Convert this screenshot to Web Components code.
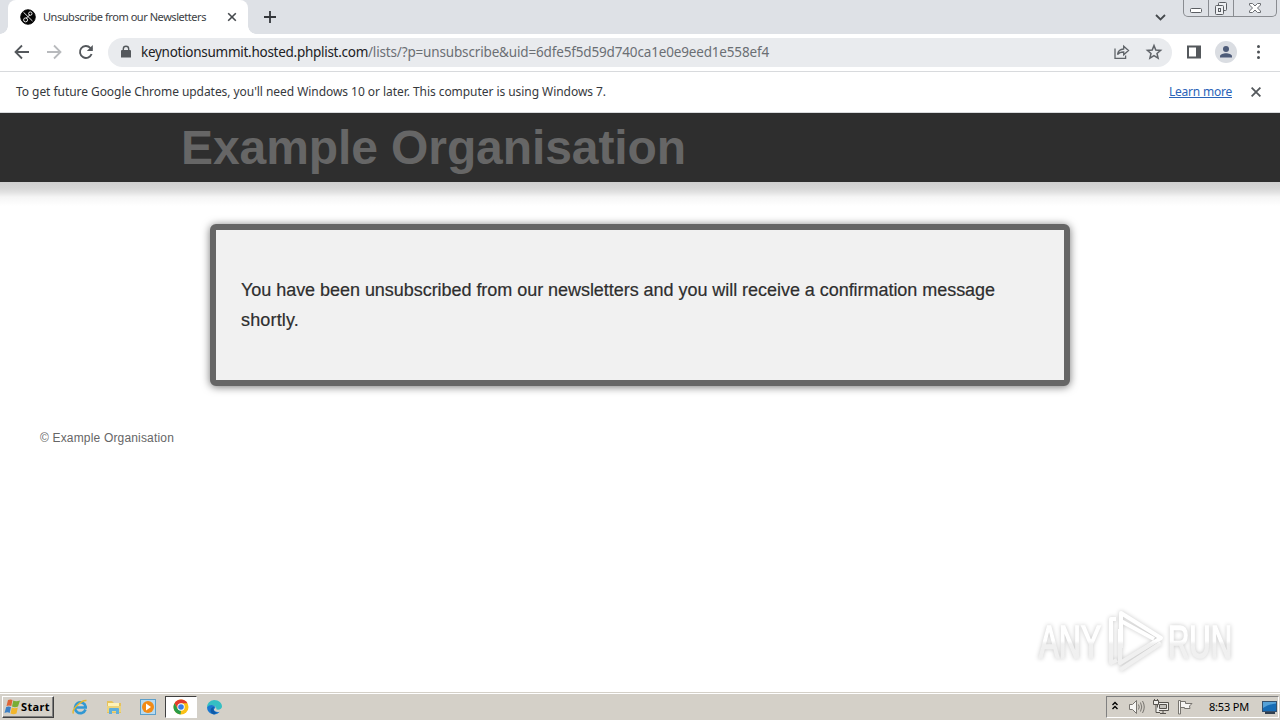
<!DOCTYPE html>
<html lang="en">
<head>
<meta charset="utf-8">
<title>Unsubscribe from our Newsletters</title>
<style>
    body{
        margin: 0;
        width: 1280px;
        height: 720px;
        overflow: hidden;
        background: #fff;
        font-family: "Noto Sans", sans-serif;
    }
</style>
</head>
<body>
<desktop-screen>
    <tab-strip slot="browser"><fit-text width="163">Unsubscribe from our Newsletters</fit-text></tab-strip>
    <address-bar slot="browser">
        <fit-text slot="host" width="227">keynotionsummit.hosted.phplist.com</fit-text>
        <fit-text slot="path" width="401">/lists/?p=unsubscribe&amp;uid=6dfe5f5d59d740ca1e0e9eed1e558ef4</fit-text>
    </address-bar>
    <info-bar slot="browser">
        <fit-text width="590">To get future Google Chrome updates, you'll need Windows 10 or later. This computer is using Windows 7.</fit-text>
        <fit-text slot="link" width="63">Learn more</fit-text>
    </info-bar>
    <news-page slot="page">
        <fit-text slot="title" width="505">Example Organisation</fit-text>
        <message-box>
            <fit-text width="754">You have been unsubscribed from our newsletters and you will receive a confirmation message</fit-text>
            <fit-text width="58">shortly.</fit-text>
        </message-box>
        <fit-text slot="footer" width="134">© Example Organisation</fit-text>
    </news-page>
    <run-watermark slot="overlay"></run-watermark>
    <task-bar slot="taskbar"></task-bar>
</desktop-screen>

<script>
function define(name, html, ready){
    const template = document.createElement('template');
    template.innerHTML = html;

    customElements.define(name, class extends HTMLElement{
        constructor(){
            super();
            this.attachShadow({ mode: 'open' });
            this.shadowRoot.appendChild(template.content.cloneNode(true));
        }

        connectedCallback(){
            if(ready) ready(this);
        }
    });
}

define('desktop-screen', `
    <style>
    :host{
        display: flex;
        flex-direction: column;
        position: relative;
        width: 1280px;
        height: 720px;
    }

    main{
        flex: 1;
        min-height: 0;
        overflow: hidden;
    }
    </style>
    <slot name="browser"></slot>
    <main><slot name="page"></slot></main>
    <slot name="taskbar"></slot>
    <slot name="overlay"></slot>
`);

define('tab-strip', `
    <style>
    :host{
        display: flex;
        height: 34px;
        background: #dee1e6;
        color: #3c4043;
        font-size: 11px;
    }

    .tab{
        display: flex;
        align-items: center;
        box-sizing: border-box;
        position: relative;
        width: 240px;
        margin-left: 8px;
        padding-left: 12px;
        border-radius: 8px 8px 0 0;
        background: #fff;
    }

    .tab::before, .tab::after{
        content: '';
        position: absolute;
        bottom: 0;
        width: 8px;
        height: 8px;
    }

    .tab::before{
        left: -8px;
        background: radial-gradient(circle at 0 0, transparent 7.5px, #fff 8px);
    }

    .tab::after{
        right: -8px;
        background: radial-gradient(circle at 100% 0, transparent 7.5px, #fff 8px);
    }

    .favicon{ margin-right: 7px; }
    .close{ margin-left: 21px; }
    .plus{ margin: 11px 0 0 16px; }
    .search{ margin: 14px 17px 0 auto; }

    .tab fit-text, .tab slot{ line-height: 14px; }

    .controls{
        display: flex;
        box-sizing: border-box;
        width: 94px;
        height: 17px;
        margin-right: 3px;
        border: 1px solid #898c91;
        border-top: 0;
        border-radius: 0 0 5px 5px;
    }

    .controls span{
        display: flex;
        justify-content: center;
        width: 24px;
        border-right: 1px solid #898c91;
    }

    .controls span:last-child{
        flex: 1;
        border: 0;
    }
    </style>
    <div class="tab">
        <svg class="favicon" width="16" height="16" viewBox="0 0 16 16" fill="none" stroke="#fff" stroke-width=".9">
            <circle cx="8" cy="8" r="7.3" fill="#050505" stroke="#050505"/>
            <path d="M3.5 3.3 12.5 12M10 5.7 5.8 9.6"/>
            <circle cx="10.3" cy="4.6" r="1.7"/><circle cx="5.6" cy="10.9" r="2"/>
        </svg>
        <slot></slot>
        <svg class="close" width="10" height="10" stroke="#45494d" stroke-width="1.6"><path d="M1.2 1.2 8.8 8.8M8.8 1.2 1.2 8.8"/></svg>
    </div>
    <svg class="plus" width="12" height="12" stroke="#34373b" stroke-width="1.8"><path d="M6 0V12M0 6H12"/></svg>
    <svg class="search" width="11" height="7" fill="none" stroke="#45494d" stroke-width="1.8"><path d="M1 1 5.5 5.5 10 1"/></svg>
    <div class="controls">
        <span><svg width="14" height="16" fill="#fff" stroke="#5b5e63"><rect x="1.5" y="8.5" width="11" height="4" rx="1"/></svg></span>
        <span><svg width="14" height="16" fill="#eef0f3" stroke="#5b5e63"><rect x="4.5" y="2.5" width="8" height="8" rx="1"/><rect x="1.5" y="5.5" width="8" height="9" rx="1"/><rect x="4.5" y="8.5" width="2" height="3"/></svg></span>
        <span><svg width="14" height="16" fill="#fff" stroke="#6b6e73"><path d="M1.5 3.5H4.5L7 6 9.5 3.5H12.5V5L9.5 8 12.5 11V12.5H9.5L7 10 4.5 12.5H1.5V11L4.5 8 1.5 5Z"/></svg></span>
    </div>
`);

define('address-bar', `
    <style>
    :host{
        display: flex;
        align-items: center;
        box-sizing: border-box;
        height: 38px;
        padding: 0 8px 1px 12px;
        border-bottom: 1px solid #d8dadd;
        background: #fff;
        font-size: 13.5px;
    }

    svg{ flex: none; }
    .forward, .reload{ margin-left: 12px; }

    .field{
        display: flex;
        align-items: center;
        box-sizing: border-box;
        width: 1064px;
        height: 29px;
        margin-left: 12px;
        padding: 0 9px 0 12px;
        border-radius: 15px;
        background: #e9ebee;
    }

    .host{ margin-left: 9px; color: #202124; }
    .path{ color: #6b6f74; }
    .share{ margin-left: auto; }
    .star{ margin-left: 14px; }
    .panel{ margin-left: 14px; }
    .profile{ margin-left: 12px; }
    .menu{ margin-left: 12px; }
    </style>
    <svg width="20" height="20" fill="none" stroke="#54585c" stroke-width="1.8"><path d="M17 10H4M10 3.5 3.5 10 10 16.5"/></svg>
    <svg class="forward" width="20" height="20" fill="none" stroke="#b8babd" stroke-width="1.8"><path d="M3 10H16M10 3.5 16.5 10 10 16.5"/></svg>
    <svg class="reload" width="20" height="20" fill="none" stroke="#54585c" stroke-width="1.9"><path d="M15.6 12A6 6 0 1 1 14.3 5.8L16 7.5"/><path d="M16.8 3V9H10.8Z" fill="#54585c" stroke="none"/></svg>
    <div class="field">
        <svg width="12" height="14" fill="#54585c"><path d="M2 5H10Q11 5 11 6V12.5H1V6Q1 5 2 5Z"/><path d="M3.3 6V4a2.7 2.7 0 0 1 5.4 0V6" fill="none" stroke="#54585c" stroke-width="1.4"/></svg>
        <div class="host"><slot name="host"></slot></div>
        <div class="path"><slot name="path"></slot></div>
        <svg class="share" width="18" height="16" fill="none" stroke="#5f6368" stroke-width="1.3"><path d="M2 4.5V14.4H12.6V11.5M4.5 10.5C5 7 7 5.2 10.7 5V2.2L15.5 6.5 10.7 10.7V8C8 8 6 8.5 4.5 10.5Z"/></svg>
        <svg class="star" width="18" height="18" fill="none" stroke="#5f6368" stroke-width="1.5"><path d="M9 2.6 10.8 7 15.6 7.4 12 10.5 13.1 15.1 9 12.7 4.9 15.1 6 10.5 2.4 7.4 7.2 7Z"/></svg>
    </div>
    <svg class="panel" width="16" height="16" fill="#54585c"><path fill-rule="evenodd" d="M1 1.5H15V14.5H1ZM3 3.5V12.5H10V3.5Z"/></svg>
    <svg class="profile" width="24" height="24"><circle cx="12" cy="12" r="11" fill="#dadde2"/><circle cx="12" cy="9" r="3" fill="#4d5b78"/><path d="M6 17.5V16.2C6 14.1 9.5 13.2 12 13.2S18 14.1 18 16.2V17.5Z" fill="#4d5b78"/></svg>
    <svg class="menu" width="18" height="18" fill="#4c5054"><circle cx="8.5" cy="3.5" r="1.5"/><circle cx="8.5" cy="9" r="1.5"/><circle cx="8.5" cy="14.5" r="1.5"/></svg>
`);

define('info-bar', `
    <style>
    :host{
        display: flex;
        align-items: center;
        box-sizing: border-box;
        height: 41px;
        padding: 0 19px 1px 16px;
        border-bottom: 1px solid #d8dadd;
        color: #36393d;
        font-size: 12px;
    }

    a{
        margin-left: auto;
        background: linear-gradient(#2a63b8, #2a63b8) 0 14px / 100% 1px no-repeat;
        color: #2a63b8;
    }

    svg{ margin-left: 19px; }
    </style>
    <slot></slot>
    <a><slot name="link"></slot></a>
    <svg width="10" height="10" stroke="#54585c" stroke-width="1.8"><path d="M.6 .6 9.4 9.4M9.4 .6 .6 9.4"/></svg>
`);

define('news-page', `
    <style>
    :host{
        display: block;
        font-family: "Liberation Sans", Arial, sans-serif;
    }

    header{
        box-sizing: border-box;
        height: 69px;
        padding-left: 181px;
        background: #2e2e2e;
        color: #666;
        font-size: 48px;
        font-weight: bold;
        line-height: 69px;
    }

    .shade{
        height: 42px;
        background: linear-gradient(#cfcfcf, #d6d6d6 6px, #e1e1e1 10px, #f5f5f5 15px, #fff 24px);
    }

    footer{
        margin: 43px 0 0 40px;
        color: #666;
        font-size: 12px;
        line-height: 18px;
    }
    </style>
    <header><slot name="title"></slot></header>
    <div class="shade"></div>
    <slot></slot>
    <footer><slot name="footer"></slot></footer>
`);

define('message-box', `
    <style>
    :host{
        display: block;
        box-sizing: border-box;
        width: 860px;
        height: 162px;
        margin: 0 auto;
        padding: 45px 25px;
        border: 6px solid #666;
        border-radius: 6px;
        background: #f1f1f1;
        box-shadow: 0 1px 8px rgba(0, 0, 0, .55);
        color: #2e2e2e;
        font-size: 18px;
        line-height: 30px;
        -webkit-text-stroke: .2px #2e2e2e;
    }
    </style>
    <slot></slot>
`);

define('run-watermark', `
    <style>
    :host{
        position: absolute;
        left: 1030px;
        top: 603px;
        width: 230px;
        height: 76px;
    }

    svg{
        display: block;
        filter: drop-shadow(0 0 2px rgba(0, 0, 0, .22));
    }

    text{
        font-family: "Liberation Sans", Arial, sans-serif;
        font-size: 46px;
        stroke-width: 1.6;
    }
    </style>
    <svg width="230" height="76" fill="url(#fade)" stroke="url(#fade)">
        <linearGradient id="fade" gradientUnits="userSpaceOnUse" x1="0" y1="0" x2="0" y2="76">
            <stop offset=".5" stop-color="#fff"/>
            <stop offset=".54" stop-color="#f0f0f0"/>
        </linearGradient>
        <text x="9" y="55" textLength="62" lengthAdjust="spacingAndGlyphs">ANY</text>
        <text x="138" y="55" textLength="64" lengthAdjust="spacingAndGlyphs">RUN</text>
        <g fill="none" stroke-width="4" stroke-linejoin="round">
            <path d="M91 45V10L131 35 90 60V26"/>
            <path d="M86 16H81V60L87 57M90 67 131 40"/>
            <path d="M91 18 124 36"/>
        </g>
    </svg>
`);

define('task-bar', `
    <style>
    :host{
        display: flex;
        align-items: center;
        box-sizing: border-box;
        height: 28px;
        padding: 0 1px 0 2px;
        border-top: 1px solid #d4d0c8;
        background: linear-gradient(#fff 1px, #d4d0c8 1px);
        color: #000;
    }

    svg{ flex: none; }

    .start{
        display: flex;
        align-items: center;
        box-sizing: border-box;
        width: 52px;
        height: 22px;
        padding-left: 1px;
        border: 1px solid;
        border-color: #fff #404040 #404040 #fff;
        box-shadow: inset -1px -1px #808080;
        font-size: 11px;
        font-weight: bold;
    }

    .apps{
        display: flex;
        align-items: center;
        margin-left: 18px;
    }

    .apps svg{ margin-right: 18px; }

    .apps .current{
        display: flex;
        align-items: center;
        justify-content: center;
        box-sizing: border-box;
        width: 32px;
        height: 22px;
        margin: 0 9px 0 -9px;
        border: 1px solid;
        border-color: #404040 #fff #fff #404040;
        background: #fff;
    }

    .apps .current svg{ margin: 0; }

    .tray{
        display: flex;
        align-items: center;
        box-sizing: border-box;
        width: 173px;
        height: 22px;
        margin-left: auto;
        padding-left: 4px;
        border: 1px solid;
        border-color: #808080 #fff #fff #808080;
        font-size: 11px;
    }

    .tray .icon{ margin-left: 8px; }
    .tray .sound{ margin-left: 9px; }
    .clock{ margin-left: 16px; }
    .desk{ margin-left: auto; }
    </style>
    <div class="start">
        <svg width="17" height="17"><path d="M4 2Q6.5 .8 8.5 2L7.3 8Q5 6.8 2.5 8Z" fill="#df6536"/><path d="M9.3 2.5Q12 4 16 2.5L14 8.5Q11 10 8 8.5Z" fill="#78ad35"/><path d="M2.2 9Q4.7 7.8 7 9L5.7 15Q3.5 13.5 .5 15Z" fill="#3d80c5"/><path d="M7.8 9.5Q10.5 11 13.8 9.5L12.5 15.5Q9.5 17 6.5 15.5Z" fill="#f2b62c"/></svg>
        <fit-text width="29">Start</fit-text>
    </div>
    <div class="apps">
        <svg width="16" height="16" fill="none"><path d="M13.5 10.5A5.4 5.4 0 1 1 13.7 7.7V8.5H4" stroke="#3298d3" stroke-width="2.6"/><path d="M1.5 14.5C-1 11 9 1 14.5 1.5" stroke="#e6b72d" stroke-width="1.4"/></svg>
        <svg width="16" height="16"><path d="M1 2H6L8 4H15V14H1Z" fill="#e6c25c"/><path d="M2 4H13V7H2Z" fill="#fff3b8"/><path d="M1 7H15V13H1Z" fill="#ecd47c"/><path d="M3 15V10Q3 9 4 9H12Q13 9 13 10V15H10V12H6V15Z" fill="#5faedb"/></svg>
        <svg width="16" height="16"><rect x=".5" y=".5" width="15" height="15" fill="#b7daf0" stroke="#5b9fca"/><circle cx="8" cy="8" r="6" fill="#f28b16"/><path d="M6 4.5 11 8 6 11.5Z" fill="#fff"/></svg>
        <div class="current"><svg width="16" height="16"><circle cx="8" cy="8" r="7.5" fill="#fbc116"/><path d="M1.5 4.2A7.5 7.5 0 0 1 14.5 4.2H8L4.7 9.8Z" fill="#e33b2e"/><path d="M1.5 4.2 4.7 9.9 8 11.6 7.5 15.5A7.5 7.5 0 0 1 1.5 4.2Z" fill="#299b48"/><circle cx="8" cy="8" r="3.7" fill="#fff"/><circle cx="8" cy="8" r="2.8" fill="#397de6"/></svg></div>
        <svg width="17" height="16"><path d="M1 9A7.2 7.2 0 0 1 8 1C13 1 16 4 16 7.5C16 10 13.5 11 10.5 10.5C10.5 6 5 5 1 9Z" fill="#35bfc3"/><path d="M1 8.5C4 4.5 9 6 9.5 9C6 10.5 9 14 13.8 12.8A7.3 7.3 0 0 1 1 8.5Z" fill="#1b78d0"/><path d="M8 8C6.5 10.5 8 13 11 13.5L8 15.5C3 14 4 8 8 8Z" fill="#0f5aa8"/></svg>
    </div>
    <div class="tray">
        <svg width="8" height="12" fill="none" stroke="#000" stroke-width="1.4"><path d="M1.5 4 4 1.5 6.5 4M1.5 8 4 5.5 6.5 8"/></svg>
        <svg class="sound" width="17" height="16" fill="none" stroke="#77746f"><path d="M1.5 5.5H4.5L8.5 1.5V14.5L4.5 10.5H1.5Z" fill="#f6f5f3"/><path d="M10.5 5.5Q12 8 10.5 10.5M12.5 3.5Q15 8 12.5 12.5M14.5 2Q18 8 14.5 14"/></svg>
        <svg class="icon" width="16" height="16" fill="#efeeeb" stroke="#55524d"><path d="M4.5 3.5H15.5V11.5H4.5ZM7 14.5H13M10 11.5V14.5"/><path d="M6.5 5.5H13.5V9.5H6.5Z" fill="#c4c2bd"/><path d="M.5 1.5H5.5V5.5H.5ZM3 5.5V13.5H7M1.5 0V2M4.5 0V2"/></svg>
        <svg class="icon" width="16" height="16" fill="#f6f5f3" stroke="#77746f"><path d="M1.5 15V1.5H3.5V15ZM3.5 2.5H8.5V4.5H15L12.5 7 13 9.5H7.5V8.5H3.5Z"/></svg>
        <fit-text class="clock" width="40">8:53 PM</fit-text>
        <svg class="desk" width="17" height="16"><rect x="1.5" y="2.5" width="14" height="10" fill="#176cb5" stroke="#34516f"/><path d="M2 3H15V4.5Q8 5 2 9Z" fill="#56a2d8"/><path d="M4 14H14" stroke="#303e4e" stroke-width="2"/></svg>
    </div>
`);

// Spreads the letters so that a line takes exactly the given width
define('fit-text', `
    <style>
    :host{
        display: block;
        white-space: nowrap;
    }

    span{ display: inline-block; }
    </style>
    <span><slot></slot></span>
`, host => {
    const span = host.shadowRoot.querySelector('span');
    const width = Number(host.getAttribute('width'));
    const gap = (width - span.getBoundingClientRect().width) / host.textContent.length;
    span.style.letterSpacing = gap + 'px';
    host.style.width = width + 'px';
});
</script>
</body>
</html>
